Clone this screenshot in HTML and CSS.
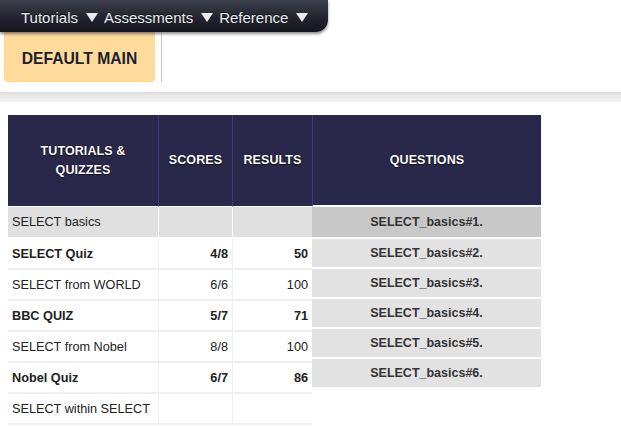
FILE: index.html
```html
<!DOCTYPE html>
<html>
<head>
<meta charset="utf-8">
<link rel="stylesheet" href="styles.css">
</head>
<body>
<nav class="topnav">
  <span class="menu-item">Tutorials<i class="caret"></i></span>
  <span class="menu-item">Assessments<i class="caret"></i></span>
  <span class="menu-item">Reference<i class="caret"></i></span>
</nav>
<div class="tabs">
  <a class="tab">DEFAULT MAIN</a>
  <span class="tab-divider"></span>
</div>
<div class="band"></div>
<div class="content">
  <table class="progress">
    <colgroup><col class="c1"><col class="c2"><col class="c3"></colgroup>
    <thead>
      <tr><th>TUTORIALS &amp;<br>QUIZZES</th><th>SCORES</th><th>RESULTS</th></tr>
    </thead>
    <tbody>
      <tr class="current"><td>SELECT basics</td><td class="num"></td><td class="num"></td></tr>
      <tr class="quiz"><td>SELECT Quiz</td><td class="num">4/8</td><td class="num">50</td></tr>
      <tr><td>SELECT from WORLD</td><td class="num">6/6</td><td class="num">100</td></tr>
      <tr class="quiz"><td>BBC QUIZ</td><td class="num">5/7</td><td class="num">71</td></tr>
      <tr><td>SELECT from Nobel</td><td class="num">8/8</td><td class="num">100</td></tr>
      <tr class="quiz"><td>Nobel Quiz</td><td class="num">6/7</td><td class="num">86</td></tr>
      <tr><td>SELECT within SELECT</td><td class="num"></td><td class="num"></td></tr>
    </tbody>
  </table>
  <table class="questions">
    <thead><tr><th>QUESTIONS</th></tr></thead>
    <tbody>
      <tr class="current"><td>SELECT_basics#1.</td></tr>
      <tr><td>SELECT_basics#2.</td></tr>
      <tr><td>SELECT_basics#3.</td></tr>
      <tr><td>SELECT_basics#4.</td></tr>
      <tr><td>SELECT_basics#5.</td></tr>
      <tr><td>SELECT_basics#6.</td></tr>
    </tbody>
  </table>
</div>
</body>
</html>
```
FILE: styles.css
```css
html, body {
  margin: 0;
  padding: 0;
  background: #fff;
  font-family: "Liberation Sans", Arial, sans-serif;
  overflow: hidden;
}

.topnav {
  position: relative;
  z-index: 2;
  display: flex;
  align-items: center;
  box-sizing: border-box;
  width: 328px;
  height: 32px;
  padding: 2px 0 0 21px;
  background: linear-gradient(#3c404c, #23242f 55%, #14141d);
  border-bottom-right-radius: 12px;
  box-shadow: 0 2px 3px rgba(0, 0, 0, 0.45);
}

.menu-item {
  display: inline-flex;
  align-items: center;
  margin-right: 6px;
  color: #ececf0;
  font-size: 15px;
  text-shadow: 0 -1px 0 rgba(0, 0, 0, 0.7);
}

.caret {
  display: inline-block;
  width: 0;
  height: 0;
  margin-left: 8px;
  margin-top: 1px;
  border-left: 6px solid transparent;
  border-right: 6px solid transparent;
  border-top: 9px solid #ececf0;
}

.tabs {
  display: flex;
  height: 50px;
  padding-left: 4px;
}

.tab {
  display: flex;
  align-items: center;
  justify-content: center;
  width: 151px;
  height: 50px;
  background: #fedb9b;
  border-radius: 0 0 4px 4px;
  color: #1d1f2e;
  font-weight: bold;
  font-size: 15.7px;
  padding-top: 4px;
  box-sizing: border-box;
}

.tab-divider {
  width: 1px;
  margin-left: 6px;
  background: #c9c9c9;
}

.band {
  margin-top: 10px;
  height: 10px;
  background: linear-gradient(#dcdcdc, #eaeaea 40%, #f3f3f3);
}

.content {
  display: flex;
  align-items: flex-start;
  padding: 13px 0 0 8px;
}

table {
  border-collapse: separate;
  border-spacing: 0;
  table-layout: fixed;
}

th {
  background: #29284a;
  color: #fff;
  font-weight: bold;
  font-size: 12.5px;
  line-height: 19px;
  text-align: center;
  padding: 0;
  text-shadow: 0 0 1px #000, 0 1px 1px rgba(0, 0, 0, 0.6);
  letter-spacing: 0.1px;
}

.progress {
  width: 304px;
}

.progress .c1 { width: 151px; }
.progress .c2 { width: 74px; }
.progress .c3 { width: 79px; }

.progress th {
  height: 91px;
  border-right: 1px solid #3d3b77;
  border-bottom: 1px solid #fff;
}

.progress th:last-child {
  border-right: none;
}

.progress td {
  height: 29px;
  padding: 0 4px;
  font-size: 12.7px;
  color: #222;
  border-bottom: 2px solid #efefef;
  border-right: 1px solid #efefef;
  white-space: nowrap;
  overflow: hidden;
}

.progress td:last-child {
  border-right: none;
}

.progress .current td {
  height: 30px;
  background: #e0e0e0;
  border-bottom-color: #fff;
  border-right-color: #fff;
}

.progress .quiz td {
  font-weight: bold;
}

.progress .num {
  text-align: right;
}

.questions {
  width: 229px;
}

.questions th {
  height: 90px;
  border-left: 1px solid #3d3b77;
  border-bottom: 2px solid #fff;
}

.questions td {
  height: 28px;
  padding: 0;
  background: #e2e2e2;
  border-bottom: 2px solid #fff;
  text-align: center;
  font-weight: bold;
  font-size: 12.5px;
  color: #333;
}

.questions .current td {
  height: 30px;
  background: #c8c8c8;
}
```
